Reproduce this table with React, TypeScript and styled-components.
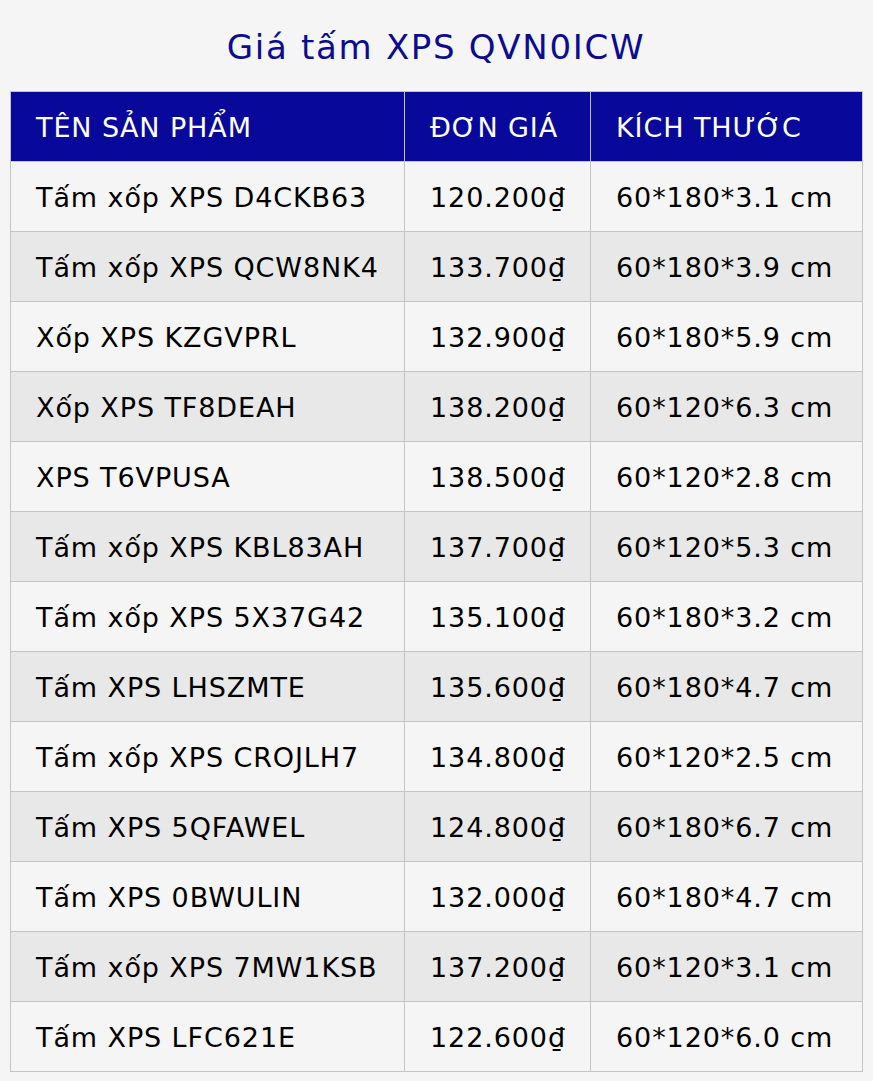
import * as React from "react";
import styled, { createGlobalStyle } from "styled-components";

const GlobalStyle = createGlobalStyle`
  html, body {
    margin: 0;
    padding: 0;
    background: #f5f5f5;
  }
  body {
    font-family: "DejaVu Sans", Verdana, sans-serif;
  }
`;

const rows: [string, string, string][] = [
  ["Tấm xốp XPS D4CKB63", "120.200₫", "60*180*3.1 cm"],
  ["Tấm xốp XPS QCW8NK4", "133.700₫", "60*180*3.9 cm"],
  ["Xốp XPS KZGVPRL", "132.900₫", "60*180*5.9 cm"],
  ["Xốp XPS TF8DEAH", "138.200₫", "60*120*6.3 cm"],
  ["XPS T6VPUSA", "138.500₫", "60*120*2.8 cm"],
  ["Tấm xốp XPS KBL83AH", "137.700₫", "60*120*5.3 cm"],
  ["Tấm xốp XPS 5X37G42", "135.100₫", "60*180*3.2 cm"],
  ["Tấm XPS LHSZMTE", "135.600₫", "60*180*4.7 cm"],
  ["Tấm xốp XPS CROJLH7", "134.800₫", "60*120*2.5 cm"],
  ["Tấm XPS 5QFAWEL", "124.800₫", "60*180*6.7 cm"],
  ["Tấm XPS 0BWULIN", "132.000₫", "60*180*4.7 cm"],
  ["Tấm xốp XPS 7MW1KSB", "137.200₫", "60*120*3.1 cm"],
  ["Tấm XPS LFC621E", "122.600₫", "60*120*6.0 cm"],
];

const Page = styled.div`
  padding: 0 11px 10px 10px;
`;

const Title = styled.h1`
  margin: 0;
  height: 91px;
  line-height: 95px;
  text-align: center;
  font-size: 34px;
  font-weight: 400;
  letter-spacing: 1.7px;
  color: #0c0c90;
`;

const Table = styled.table`
  width: 852px;
  border-collapse: collapse;
  border: 1px solid #c4c4c4;
  font-size: 27px;
  letter-spacing: 0.9px;
  table-layout: fixed;
`;

const HeadCell = styled.th<{ $w: number }>`
  box-sizing: border-box;
  width: ${(p) => p.$w}px;
  height: 70px;
  padding: 2px 0 0 25px;
  text-align: left;
  font-weight: 400;
  color: #ffffff;
  background: #08089a;
  border: 1px solid #c4c4c4;
  border-top: none;
  white-space: nowrap;
`;

const Row = styled.tr<{ $alt: boolean }>`
  background: ${(p) => (p.$alt ? "#e8e8e8" : "#f5f5f5")};
`;

const Cell = styled.td`
  box-sizing: border-box;
  height: 70px;
  padding: 2px 0 0 25px;
  color: #000;
  border: 1px solid #c4c4c4;
  white-space: nowrap;
`;

export default function App() {
  return (
    <>
      <GlobalStyle />
      <Page>
        <Title>Giá tấm XPS QVN0ICW</Title>
        <Table>
          <thead>
            <tr>
              <HeadCell $w={394}>TÊN SẢN PHẨM</HeadCell>
              <HeadCell $w={186}>ĐƠN GIÁ</HeadCell>
              <HeadCell $w={272}>KÍCH THƯỚC</HeadCell>
            </tr>
          </thead>
          <tbody>
            {rows.map((r, i) => (
              <Row key={i} $alt={i % 2 === 1}>
                <Cell>{r[0]}</Cell>
                <Cell>{r[1]}</Cell>
                <Cell>{r[2]}</Cell>
              </Row>
            ))}
          </tbody>
        </Table>
      </Page>
    </>
  );
}
